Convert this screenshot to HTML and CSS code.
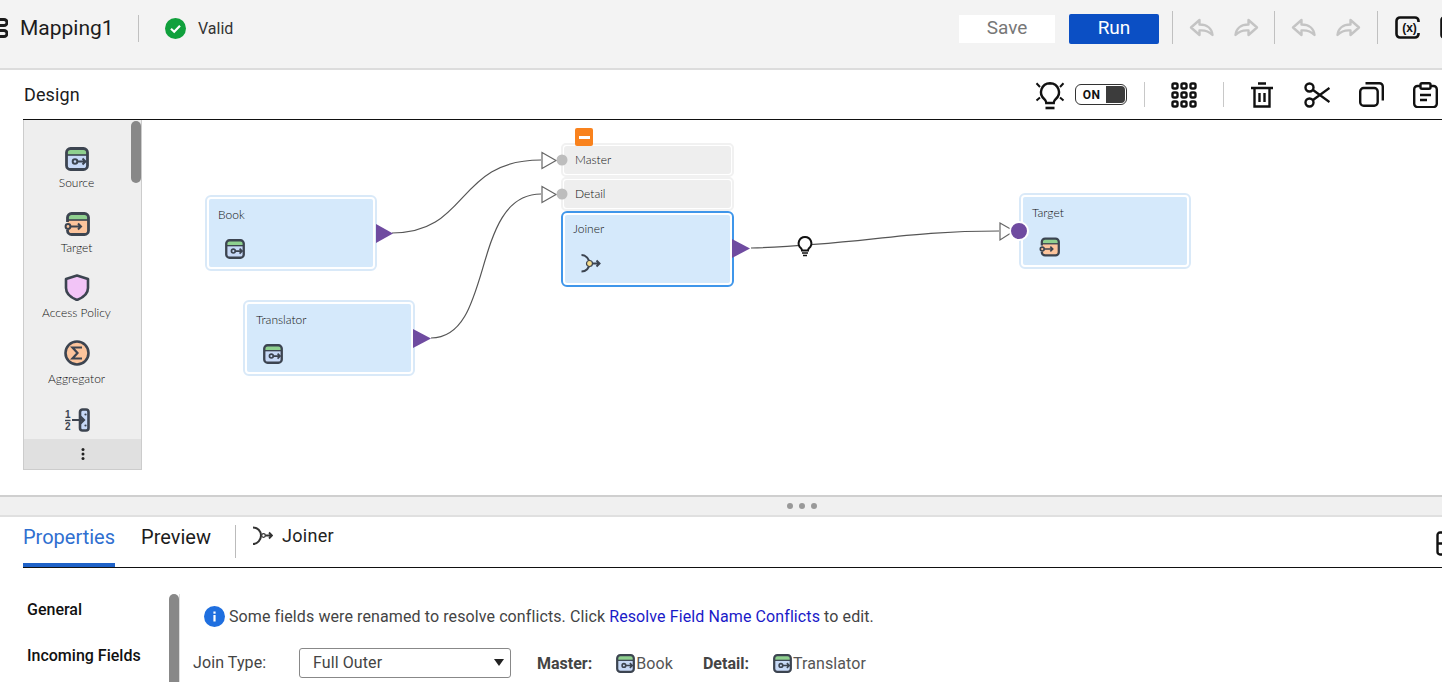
FILE: index.html
```html
<!DOCTYPE html>
<html lang="en">
<head>
<meta charset="utf-8">
<title>Mapping1</title>
<link rel="stylesheet" href="styles.css">
</head>
<body>
<svg class="defs" width="0" height="0" aria-hidden="true">
  <defs>
    <symbol id="i-source" viewBox="0 0 24 24">
      <rect x="1.500" y="1.500" width="21" height="21" rx="4" fill="#c7d9f7"/>
      <path d="M1.500 8V5.500a4 4 0 0 1 4-4h13a4 4 0 0 1 4 4V8z" fill="#8fd08f"/>
      <path d="M1.500 8h21" stroke="#3c4450" stroke-width="1.600" fill="none"/>
      <rect x="1.500" y="1.500" width="21" height="21" rx="4" fill="none" stroke="#3c4450" stroke-width="2.800"/>
      <circle cx="10" cy="14.500" r="2.300" fill="none" stroke="#3c4450" stroke-width="2"/>
      <path d="M12.300 14.500H20.500M17.500 11.500l3 3-3 3" fill="none" stroke="#3c4450" stroke-width="2"/>
    </symbol>
    <symbol id="i-target" viewBox="0 0 26 24">
      <rect x="3.500" y="1.500" width="21" height="21" rx="4" fill="#fcc49c"/>
      <path d="M3.500 8V5.500a4 4 0 0 1 4-4h13a4 4 0 0 1 4 4V8z" fill="#8fd08f"/>
      <path d="M3.500 8h21" stroke="#3c4450" stroke-width="1.600" fill="none"/>
      <path d="M3.500 10V5.500a4 4 0 0 1 4-4h13a4 4 0 0 1 4 4v13a4 4 0 0 1-4 4h-13a4 4 0 0 1-4-4v-.5" fill="none" stroke="#3c4450" stroke-width="2.800"/>
      <circle cx="4" cy="14.500" r="2.400" fill="#fcc49c" stroke="#3c4450" stroke-width="2"/>
      <path d="M6.400 14.500H17M14 11.500l3 3-3 3" fill="none" stroke="#3c4450" stroke-width="2"/>
    </symbol>
    <symbol id="i-undo" viewBox="0 0 26 20">
      <path d="M10.500 2 2 9.500l8.500 7.500v-4.500c5.500-.5 9.500 1 13 4.500-.5-6.500-5.500-10.500-13-10.500z" fill="none" stroke="#c4c4c4" stroke-width="2.400" stroke-linejoin="round"/>
    </symbol>
    <symbol id="i-redo" viewBox="0 0 26 20">
      <path d="M15.500 2 24 9.500 15.500 17v-4.500c-5.500-.5-9.500 1-13 4.500.5-6.500 5.500-10.500 13-10.500z" fill="none" stroke="#c4c4c4" stroke-width="2.400" stroke-linejoin="round"/>
    </symbol>
  </defs>
</svg>

<div class="app">
  <header class="topbar">
    <div class="title-group">
      <svg class="map-icon" width="8" height="20" viewBox="0 0 8 20"><path d="M-4 1.500h8a2.500 2.500 0 0 1 0 6h-8M-4 12.500h8a2.500 2.500 0 0 1 0 6h-8" fill="none" stroke="#1c1c1c" stroke-width="3"/></svg>
      <span class="map-title">Mapping1</span>
      <span class="valid">
        <svg width="21" height="21" viewBox="0 0 21 21"><circle cx="10.500" cy="10.500" r="10.500" fill="#10a03c"/><path d="M6 10.800l3.200 3 5.800-6" fill="none" stroke="#fff" stroke-width="2.200"/></svg>
        <span>Valid</span>
      </span>
    </div>
    <button class="btn btn-save">Save</button>
    <button class="btn btn-run">Run</button>
    <div class="tb-group">
      <svg width="26" height="20"><use href="#i-undo"/></svg>
      <svg width="26" height="20"><use href="#i-redo"/></svg>
    </div>
    <div class="tb-group tb-group-wide">
      <svg width="26" height="20"><use href="#i-undo"/></svg>
      <svg width="26" height="20"><use href="#i-redo"/></svg>
    </div>
    <div class="tb-group tb-group-last">
      <svg width="25" height="23" viewBox="0 0 25 23"><path d="M23.500 6V5a3.500 3.500 0 0 0-3.500-3.500H5A3.500 3.500 0 0 0 1.500 5v13A3.500 3.500 0 0 0 5 21.500h15a3.500 3.500 0 0 0 3.500-3.500v-1" fill="none" stroke="#111" stroke-width="2.600"/><text x="14.500" y="15.500" text-anchor="middle" class="fx-text">(x)</text></svg>
      <svg class="tool-clip" width="4" height="23" viewBox="0 0 4 23"><path d="M5 1.500H4A2.500 2.500 0 0 0 1.500 4v15A2.500 2.500 0 0 0 4 21.500h1" fill="none" stroke="#111" stroke-width="2.600"/></svg>
    </div>
  </header>

  <div class="design-row">
    <span class="design-title">Design</span>
    <div class="design-tools">
      <svg class="bulb" width="30" height="30" viewBox="0 0 30 30"><path d="M15 3.200a9 9 0 0 0-5.600 16c1.300 1.200 1.900 2.300 1.900 3.800h7.400c0-1.500.6-2.600 1.900-3.800a9 9 0 0 0-5.600-16z" fill="none" stroke="#111" stroke-width="2.400"/><path d="M10.500 28h9" stroke="#111" stroke-width="2.600"/><path d="M1.500 3.300 5 7M28.500 3.300 25 7M1.500 20.500l3.500-3M28.500 20.500l-3.500-3" stroke="#111" stroke-width="2"/></svg>
      <div class="toggle"><span class="toggle-on">ON</span><span class="toggle-knob"></span></div>
      <span class="dt-sep dt-sep-a"></span>
      <svg class="grid-icon" width="26" height="26" viewBox="0 0 26 26"><g fill="none" stroke="#111" stroke-width="2.400"><rect x="1.500" y="1.500" width="5" height="5" rx="1.500"/><rect x="10.500" y="1.500" width="5" height="5" rx="1.500"/><rect x="19.500" y="1.500" width="5" height="5" rx="1.500"/><rect x="1.500" y="10.500" width="5" height="5" rx="1.500"/><rect x="10.500" y="10.500" width="5" height="5" rx="1.500"/><rect x="19.500" y="10.500" width="5" height="5" rx="1.500"/><rect x="1.500" y="19.500" width="5" height="5" rx="1.500"/><rect x="10.500" y="19.500" width="5" height="5" rx="1.500"/><rect x="19.500" y="19.500" width="5" height="5" rx="1.500"/></g></svg>
      <span class="dt-sep dt-sep-b"></span>
      <svg class="trash" width="22" height="26" viewBox="0 0 22 26"><path d="M0 6h22M7 1.500h8M3.500 6v18.500h15V6M8.500 11v9M13.500 11v9" fill="none" stroke="#111" stroke-width="2.400"/></svg>
      <svg class="scissors" width="26" height="26" viewBox="0 0 26 26"><g fill="none" stroke="#111" stroke-width="2.400"><circle cx="5.500" cy="5.500" r="4"/><circle cx="5.500" cy="20.500" r="4"/><path d="M9 8 25.500 20M9 18 25.500 6"/></g></svg>
      <svg class="copy" width="25" height="25" viewBox="0 0 25 25"><g fill="none" stroke="#111" stroke-width="2.400"><rect x="1.200" y="6" width="17.500" height="17.800" rx="3.500"/><path d="M6.500 1.200h14a3.300 3.300 0 0 1 3.300 3.300v14"/></g></svg>
      <svg class="paste" width="25" height="26" viewBox="0 0 25 26"><g fill="none" stroke="#111" stroke-width="2.400"><path d="M7 4H4.500a3.300 3.300 0 0 0-3.300 3.300v14.500a3.300 3.300 0 0 0 3.300 3.300h16a3.300 3.300 0 0 0 3.300-3.300V7.300A3.300 3.300 0 0 0 20.500 4H18"/><rect x="7.500" y="1.200" width="10" height="5.500" rx="1.500"/><path d="M7 13h11M7 18h7"/></g></svg>
    </div>
  </div>

  <section class="canvas">
    <aside class="palette">
      <div class="palette-list">
        <div class="pal-item"><svg width="26" height="24"><use href="#i-source"/></svg><span>Source</span></div>
        <div class="pal-item"><svg width="26" height="24"><use href="#i-target"/></svg><span>Target</span></div>
        <div class="pal-item"><svg width="26" height="27" viewBox="0 0 26 27"><path d="M13 1.500 24 5v9c0 5.500-4.500 9.500-11 12C6.500 23.500 2 19.500 2 14V5z" fill="#f2c4f7" stroke="#3c4450" stroke-width="2.600" stroke-linejoin="round"/></svg><span>Access Policy</span></div>
        <div class="pal-item pal-item-agg"><svg width="26" height="26" viewBox="0 0 26 26"><circle cx="13" cy="13" r="11.500" fill="#fcc49c" stroke="#3c4450" stroke-width="2.600"/><path d="M18 7.500H8.500l5 5.500-5 5.500H18" fill="none" stroke="#3c4450" stroke-width="2.200"/></svg><span>Aggregator</span></div>
        <div class="pal-item pal-item-seq"><svg width="26" height="24" viewBox="0 0 26 24"><rect x="16" y="1.500" width="8.500" height="21" rx="2.500" fill="#c7d9f7" stroke="#3c4450" stroke-width="2.600"/><path d="M8 12h12M16.500 8.500l3.500 3.500-3.500 3.500" fill="none" stroke="#3c4450" stroke-width="2.200"/><text x="1" y="10" class="seq-num">1</text><text x="1" y="21.500" class="seq-num">2</text><path d="M1 12.500h5.500" stroke="#3c4450" stroke-width="1.400"/><circle cx="21.500" cy="6.500" r="1.100" fill="#3c4450"/><circle cx="21.500" cy="17.500" r="1.100" fill="#3c4450"/></svg></div>
      </div>
      <div class="palette-foot"><svg width="4" height="12" viewBox="0 0 4 12"><circle cx="2" cy="1.500" r="1.500" fill="#222"/><circle cx="2" cy="6" r="1.500" fill="#222"/><circle cx="2" cy="10.500" r="1.500" fill="#222"/></svg></div>
      <span class="palette-thumb"></span>
    </aside>

    <div class="node node-book"><div class="node-inner"><span class="node-label">Book</span><svg class="node-icon" width="20" height="20"><use href="#i-source"/></svg></div></div>
    <div class="node node-translator"><div class="node-inner"><span class="node-label">Translator</span><svg class="node-icon" width="20" height="20"><use href="#i-source"/></svg></div></div>
    <div class="group group-master"><span class="node-label">Master</span></div>
    <div class="group group-detail"><span class="node-label">Detail</span></div>
    <div class="node node-joiner"><div class="node-inner"><span class="node-label">Joiner</span>
      <svg class="node-icon joiner-icon" width="20" height="20" viewBox="0 0 20 20"><path d="M.5 1c4.500 0 8 4 8 8.500s-3.500 8-8 8" fill="none" stroke="#3c4450" stroke-width="2"/><path d="M11 9.500h7.500M15.500 6.500l3 3-3 3" fill="none" stroke="#3c4450" stroke-width="2"/><circle cx="8.500" cy="9.500" r="3" fill="#f5dc8c" stroke="#3c4450" stroke-width="1.200"/></svg>
    </div></div>
    <div class="node node-target"><div class="node-inner"><span class="node-label">Target</span><svg class="node-icon" width="21" height="20"><use href="#i-target"/></svg></div></div>

    <button class="collapse"><span></span></button>

    <svg class="wires" width="1442" height="375" viewBox="0 120 1442 375">
      <g fill="none" stroke="#555" stroke-width="1.200">
        <path d="M392 233C470 233 455 160 541 160"/>
        <path d="M431 338C495 338 470 194 541 194"/>
        <path d="M751 248C860 245 900 231 999 231"/>
      </g>
      <g fill="#fff" stroke="#666" stroke-width="1.200">
        <path d="M542 152.500 556 160.500 542 168.500z"/>
        <path d="M542 186.500 556 194.500 542 202.500z"/>
        <path d="M1000 223 1014 231 1000 240z"/>
      </g>
      <g fill="#6f4ba0">
        <path d="M376 224 393 233.500 376 243z"/>
        <path d="M413 329 431 338.500 413 348z"/>
        <path d="M732 239 750 248.500 732 258z"/>
      </g>
      <circle cx="562" cy="160" r="5.500" fill="#bdbdbd"/>
      <circle cx="562" cy="194" r="5.500" fill="#bdbdbd"/>
      <circle cx="1019" cy="231" r="9" fill="#6f4ba0" stroke="#fff" stroke-width="2"/>
      <g fill="#fff" stroke="#111" stroke-width="2">
        <path d="M805 237a6.300 6.300 0 0 0-4 11.200c.8.800 1 1.400 1 2.300h6c0-.9.200-1.500 1-2.300A6.300 6.300 0 0 0 805 237z"/>
        <path d="M802 253h6M803 255.500h4" fill="none" stroke-width="1.400"/>
      </g>
    </svg>
  </section>

  <div class="splitter"><i></i><i></i><i></i></div>

  <nav class="tabs">
    <span class="tab tab-active">Properties</span>
    <span class="tab">Preview</span>
    <span class="tab-sep"></span>
    <span class="tab-item">
      <svg width="20" height="20" viewBox="0 0 20 20"><path d="M0 1.500c4.500 0 8 3.500 8 8s-3.500 8.500-8 8.500" fill="none" stroke="#333" stroke-width="2"/><path d="M10 9.500h9M16 6.500l3 3-3 3" fill="none" stroke="#333" stroke-width="1.800"/><circle cx="10.500" cy="9.500" r="1.800" fill="#fff" stroke="#333" stroke-width="1.200"/></svg>
      <span>Joiner</span>
    </span>
    <svg class="tab-clip" width="6" height="25" viewBox="0 0 6 25"><path d="M7 1.500H4A2.500 2.500 0 0 0 1.500 4v17A2.500 2.500 0 0 0 4 23.500h3M1.500 12.500H7" fill="none" stroke="#111" stroke-width="2.400"/></svg>
  </nav>

  <section class="props">
    <div class="side-nav">
      <div class="side-item side-general">General</div>
      <div class="side-item side-incoming">Incoming Fields</div>
    </div>
    <div class="side-scroll"><span></span></div>
    <div class="content">
      <div class="msg">
        <svg width="21" height="21" viewBox="0 0 21 21"><circle cx="10.500" cy="10.500" r="10.500" fill="#1f6fdf"/><rect x="9.400" y="9" width="2.200" height="6.500" fill="#fff"/><rect x="9.400" y="5.500" width="2.200" height="2.200" fill="#fff"/></svg>
        <span>Some fields were renamed to resolve conflicts. Click <a class="link" href="#">Resolve Field Name Conflicts</a> to edit.</span>
      </div>
      <div class="form-row">
        <span class="field-label">Join Type:</span>
        <div class="select"><span>Full Outer</span><svg width="10" height="7" viewBox="0 0 10 7"><path d="M0 0h10L5 7z" fill="#222"/></svg></div>
        <strong class="ref-label ref-master">Master:</strong>
        <span class="ref"><svg width="19" height="19"><use href="#i-source"/></svg><span>Book</span></span>
        <strong class="ref-label ref-detail">Detail:</strong>
        <span class="ref"><svg width="19" height="19"><use href="#i-source"/></svg><span>Translator</span></span>
      </div>
    </div>
  </section>
</div>
</body>
</html>
```

FILE: styles.css
```css
* { box-sizing: border-box; }
html, body { margin: 0; padding: 0; background: #fff; overflow: hidden; }
body { font-family: Roboto, "Liberation Sans", sans-serif; color: #1c1c1c; }
svg { display: block; flex: none; }
.defs { position: absolute; }
.app { width: 1442px; height: 682px; overflow: hidden; display: flex; flex-direction: column; }

/* top bar */
.topbar { height: 70px; flex: none; display: flex; align-items: center; background: #f3f3f3; border-bottom: 2px solid #dcdcdc; padding-bottom: 10px; }
.title-group { width: 959px; flex: none; display: flex; align-items: center; margin-top: -2px; }
.map-icon { margin-right: 12px; }
.map-title { font-size: 21px; width: 119px; height: 27px; line-height: 27px; border-right: 1px solid #c0c0c0; }
.valid { display: flex; align-items: center; gap: 12px; font-size: 16px; color: #333; margin-left: 26px; }
.btn { border: 0; font: inherit; font-size: 19px; padding: 0 0 3px; flex: none; }
.btn-save { width: 96px; height: 28px; background: #fff; color: #777; }
.btn-run { width: 90px; height: 30px; background: #0b4fc4; color: #fff; border-radius: 2px; margin-left: 14px; margin-right: 13px; }
.tb-group { display: flex; align-items: center; gap: 18px; height: 33px; padding: 0 15px 0 16px; border-left: 1px solid #c0c0c0; flex: none; margin-bottom: 3px; }
.tb-group-wide { padding-right: 16px; }
.tb-group-last { padding-left: 17px; }
.tool-clip { margin-left: 2px; }
.fx-text { font: 700 12px "Liberation Sans", sans-serif; fill: #111; }

/* design row */
.design-row { height: 50px; flex: none; margin-left: 23px; display: flex; align-items: center; border-bottom: 1px solid #111; }
.design-title { font-size: 18px; margin-left: 1px; letter-spacing: .1px; }
.design-tools { margin-left: auto; display: flex; align-items: center; padding-right: 4px; }
.bulb { margin-right: 10px; }
.toggle { width: 52px; height: 21px; border: 1px solid #333; border-radius: 6px; background: #fff; display: flex; align-items: stretch; padding: 1px; }
.toggle-on { width: 29px; font: 700 12px/18px Roboto, sans-serif; text-align: center; color: #111; letter-spacing: .3px; }
.toggle-knob { flex: 1; background: #3c3c3c; border-radius: 0 4px 4px 0; }
.dt-sep { width: 1px; height: 25px; background: #c8c8c8; }
.dt-sep-a { margin-left: 17px; margin-right: 26px; }
.dt-sep-b { margin-left: 26px; margin-right: 27px; }
.scissors { margin-left: 31px; }
.copy { margin-left: 29px; }
.paste { margin-left: 29px; }

/* canvas */
.canvas { position: relative; height: 375px; flex: none; padding-left: 23px; font-family: Lato, "Liberation Sans", sans-serif; font-weight: 300; }
.palette { position: relative; width: 119px; height: 350px; background: #eee; border: 1px solid #ccc; border-top: 0; display: flex; flex-direction: column; }
.palette-list { height: 319px; overflow: hidden; padding-top: 4.500px; flex: none; }
.pal-item { width: 105px; height: 65.300px; display: flex; flex-direction: column; align-items: center; justify-content: flex-end; font-size: 12px; line-height: 14px; color: #111; }
.pal-item svg { margin-bottom: 5px; }
.pal-item-agg svg { margin-bottom: 6px; }
.pal-item-seq svg { margin-bottom: 19px; }
.palette-foot { flex: 1; background: #e0e0e0; display: flex; align-items: center; justify-content: center; }
.palette-thumb { position: absolute; top: 1px; right: 0; width: 10px; height: 62px; background: #888; border-radius: 5px; }
.seq-num { font: 700 10px "Liberation Sans", sans-serif; fill: #3c4450; }

.node { position: absolute; width: 172px; height: 76px; background: #fff; border: 2px solid #d9e9f8; border-radius: 6px; padding: 2px; }
.node-inner { height: 100%; background: #d5e9fb; border-radius: 2px; padding: 9px 9px 0; }
.node-label { display: block; font-size: 12px; line-height: 14px; color: #111; }
.node-icon { margin: 17px 0 0 7px; }
.node-book { left: 205px; top: 75px; }
.node-translator { left: 243px; top: 180px; }
.node-target { left: 1019px; top: 73px; }
.node-joiner { left: 561px; top: 91px; width: 173px; border-color: #3f96ea; }
.node-joiner .node-inner { padding: 7px 8px 0; }
.joiner-icon { margin: 18px 0 0 8px; }
.group { position: absolute; left: 561px; width: 173px; height: 34px; border: 2px solid #f1f1f1; border-radius: 5px; background: #fff; padding: 1px; }
.group .node-label { background: #eee; height: 100%; border-radius: 3px; padding: 1px 0 0 11px; line-height: 26px; }
.group-master { top: 23px; }
.group-detail { top: 57px; }
.collapse { position: absolute; left: 575px; top: 8px; width: 18px; height: 18px; background: #f9821d; border: 0; border-radius: 2px; padding: 0; display: flex; align-items: center; justify-content: center; }
.collapse span { width: 11px; height: 3px; background: #fff; }
.wires { position: absolute; left: 0; top: 0; pointer-events: none; }

/* splitter */
.splitter { height: 22px; flex: none; background: #f0f0f0; border-top: 2px solid #cfcfcf; border-bottom: 2px solid #e0e0e0; display: flex; align-items: center; justify-content: center; gap: 6px; padding-left: 162px; }
.splitter i { width: 6px; height: 6px; border-radius: 50%; background: #999; }

/* tabs */
.tabs { height: 51px; flex: none; margin-left: 23px; display: flex; align-items: flex-start; border-bottom: 1px solid #111; }
.tab { height: 50px; font-size: 20px; line-height: 40px; color: #1c1c1c; margin-right: 25px; }
.tab-active { color: #2f6fd0; border-bottom: 4px solid #1f62c8; margin-right: 26px; }
.tab-sep { width: 1px; height: 33px; background: #bbb; margin-top: 8px; margin-left: -1px; }
.tab-item { display: flex; align-items: center; gap: 9px; font-size: 18px; letter-spacing: .3px; height: 37px; margin-left: 17px; color: #222; }
.tab-clip { margin-left: auto; margin-top: 14px; }

/* properties */
.props { flex: 1; margin-left: 23px; display: flex; padding-top: 26px; min-height: 0; }
.side-nav { width: 146px; padding-left: 4px; flex: none; font-size: 16px; font-weight: 500; color: #111; }
.side-item { line-height: 20px; }
.side-general { margin-top: 6px; }
.side-incoming { margin-top: 26px; }
.side-scroll { width: 11px; flex: none; border-right: 1px solid #ddd; }
.side-scroll span { display: block; width: 10px; height: 100%; background: #888; border-radius: 5px 5px 0 0; }
.content { padding-left: 13px; font-size: 16px; letter-spacing: .1px; color: #444; }
.msg { display: flex; align-items: center; gap: 4px; height: 21px; margin: 12px 0 0 11px; }
.link { color: #1a1ac8; text-decoration: none; }
.form-row { display: flex; align-items: center; height: 30px; margin-top: 21px; }
.field-label { width: 106px; flex: none; padding-bottom: 2px; }
.select { width: 212px; height: 30px; flex: none; border: 1px solid #888; border-radius: 3px; display: flex; align-items: center; justify-content: space-between; padding: 0 6px 2px 13px; }
.ref-label { font-size: 16px; font-weight: 700; letter-spacing: 0; }
.ref-master { margin-left: 26px; margin-right: 24px; }
.ref-detail { margin-left: 30px; margin-right: 24px; }
.ref { display: flex; align-items: center; gap: 1px; color: #555; }
```
